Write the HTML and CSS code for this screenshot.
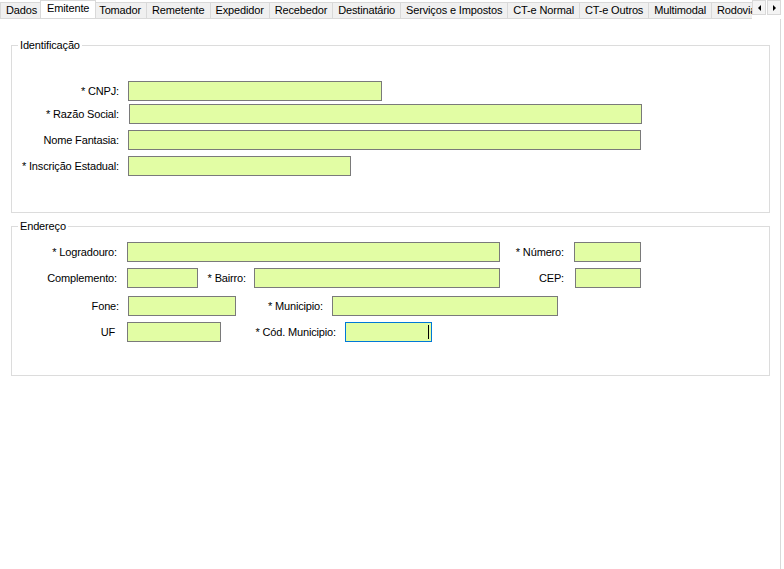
FILE: index.html
```html
<!DOCTYPE html>
<html>
<head>
    <meta charset="utf-8">
    <title>Emitente</title>
    <link rel="stylesheet" href="styles.css">
</head>
<body>
    <div class="window">
        <div class="tabstrip">
            <div class="tabs">
                <div class="tab">Dados</div>
                <div class="tab active">Emitente</div>
                <div class="tab">Tomador</div>
                <div class="tab">Remetente</div>
                <div class="tab">Expedidor</div>
                <div class="tab">Recebedor</div>
                <div class="tab">Destinatário</div>
                <div class="tab">Serviços e Impostos</div>
                <div class="tab">CT-e Normal</div>
                <div class="tab">CT-e Outros</div>
                <div class="tab">Multimodal</div>
                <div class="tab">Rodoviário</div>
            </div>
            <div class="scroller">
                <span class="arrow arrow-left"></span>
                <span class="arrow arrow-right"></span>
            </div>
        </div>

        <div class="page">
            <fieldset class="group group-ident">
                <legend>Identificação</legend>
                <div class="row">
                    <label class="lbl l-107">* CNPJ:</label>
                    <div class="field ml-9 w-cnpj"></div>
                </div>
                <div class="row row-tight">
                    <label class="lbl l-107">* Razão Social:</label>
                    <div class="field ml-10 w-wide"></div>
                </div>
                <div class="row">
                    <label class="lbl l-107">Nome Fantasia:</label>
                    <div class="field ml-9 w-wide"></div>
                </div>
                <div class="row">
                    <label class="lbl l-107">* Inscrição Estadual:</label>
                    <div class="field ml-9 w-ie"></div>
                </div>
            </fieldset>

            <fieldset class="group group-end">
                <legend>Endereço</legend>
                <div class="row">
                    <label class="lbl l-105">* Logradouro:</label>
                    <div class="field ml-10 w-lograd"></div>
                    <label class="lbl l-64">* Número:</label>
                    <div class="field ml-10 w-num"></div>
                </div>
                <div class="row">
                    <label class="lbl l-105">Complemento:</label>
                    <div class="field ml-10 w-compl"></div>
                    <label class="lbl l-48">* Bairro:</label>
                    <div class="field ml-8 w-bairro"></div>
                    <label class="lbl l-64">CEP:</label>
                    <div class="field ml-11 w-cep"></div>
                </div>
                <div class="row row-loose">
                    <label class="lbl l-107">Fone:</label>
                    <div class="field ml-9 w-fone"></div>
                    <label class="lbl l-87">* Municipio:</label>
                    <div class="field ml-9 w-mun"></div>
                </div>
                <div class="row">
                    <label class="lbl l-103">UF</label>
                    <div class="field ml-12 w-uf"></div>
                    <label class="lbl l-115">* Cód. Municipio:</label>
                    <div class="field ml-9 w-cod focused"></div>
                </div>
            </fieldset>
        </div>
    </div>
</body>
</html>
```

FILE: styles.css
```css
* {
    box-sizing: border-box;
}

body {
    margin: 0;
    font-family: "Liberation Sans", Arial, sans-serif;
    font-size: 11px;
    letter-spacing: -0.15px;
    color: #000;
    background: #fff;
}

.window {
    width: 784px;
    height: 569px;
    overflow: hidden;
}

/* tab header */

.tabstrip {
    display: flex;
    height: 19px;
}

.tabs {
    display: flex;
    align-items: flex-end;
    width: 752px;
    overflow: hidden;
    border-bottom: 1px solid #d9d9d9;
    padding-left: 1px;
}

.tab {
    flex-shrink: 0;
    height: 16px;
    line-height: 15px;
    padding: 0 5px;
    margin-left: -1px;
    border: 1px solid #d9d9d9;
    border-bottom: none;
    background: #f0f0f0;
    white-space: nowrap;
}

.tab.active {
    position: relative;
    z-index: 1;
    height: 19px;
    line-height: 15px;
    margin: 0 -2px -1px -3px;
    padding: 0 6px;
    background: #fff;
}

.scroller {
    display: flex;
    height: 15px;
}

.arrow {
    width: 14px;
    height: 15px;
    border: 1px solid #d9d9d9;
    background: #f4f4f4;
    display: flex;
    align-items: center;
    justify-content: center;
}

.arrow + .arrow {
    margin-left: 1px;
}

.arrow::before {
    content: "";
    border-top: 3px solid transparent;
    border-bottom: 3px solid transparent;
}

.arrow-left::before {
    border-right: 3px solid #000;
}

.arrow-right::before {
    border-left: 3px solid #000;
}

/* tab page */

.page {
    width: 781px;
    height: 550px;
    padding-top: 20px;
    border-right: 1px solid #d9d9d9;
}

.group {
    margin: 0 0 0 11px;
    width: 759px;
    border: 1px solid #dcdcdc;
    padding: 0;
}

.group legend {
    margin-left: 6px;
    padding: 0 2px;
    line-height: 13px;
}

.group-ident {
    padding: 29px 0 36px;
}

.group-end {
    margin-top: 7px;
    padding: 9px 0 33px;
}

.row {
    display: flex;
    align-items: center;
    height: 20px;
    margin-top: 6px;
}

.group legend + .row {
    margin-top: 0;
}

.row-tight {
    margin-top: 3px;
}

.row-loose {
    margin-top: 8px;
}

.lbl {
    flex-shrink: 0;
    text-align: right;
    white-space: nowrap;
}

.l-48 { width: 48px; }
.l-64 { width: 64px; }
.l-87 { width: 87px; }
.l-103 { width: 103px; }
.l-105 { width: 105px; }
.l-107 { width: 107px; }
.l-115 { width: 115px; }

.field {
    position: relative;
    flex-shrink: 0;
    height: 20px;
    border: 1px solid #7a7a7a;
    background: #e2fda4;
}

.field.focused {
    border-color: #0078d7;
}

.field.focused::after {
    content: "";
    position: absolute;
    right: 2px;
    top: 2px;
    width: 1px;
    height: 14px;
    background: #000;
}

.ml-8 { margin-left: 8px; }
.ml-9 { margin-left: 9px; }
.ml-10 { margin-left: 10px; }
.ml-11 { margin-left: 11px; }
.ml-12 { margin-left: 12px; }

.w-cnpj { width: 254px; }
.w-wide { width: 513px; }
.w-ie { width: 223px; }
.w-lograd { width: 373px; }
.w-num { width: 67px; }
.w-compl { width: 71px; }
.w-bairro { width: 246px; }
.w-cep { width: 66px; }
.w-fone { width: 108px; }
.w-mun { width: 226px; }
.w-uf { width: 94px; }
.w-cod { width: 87px; }
```
